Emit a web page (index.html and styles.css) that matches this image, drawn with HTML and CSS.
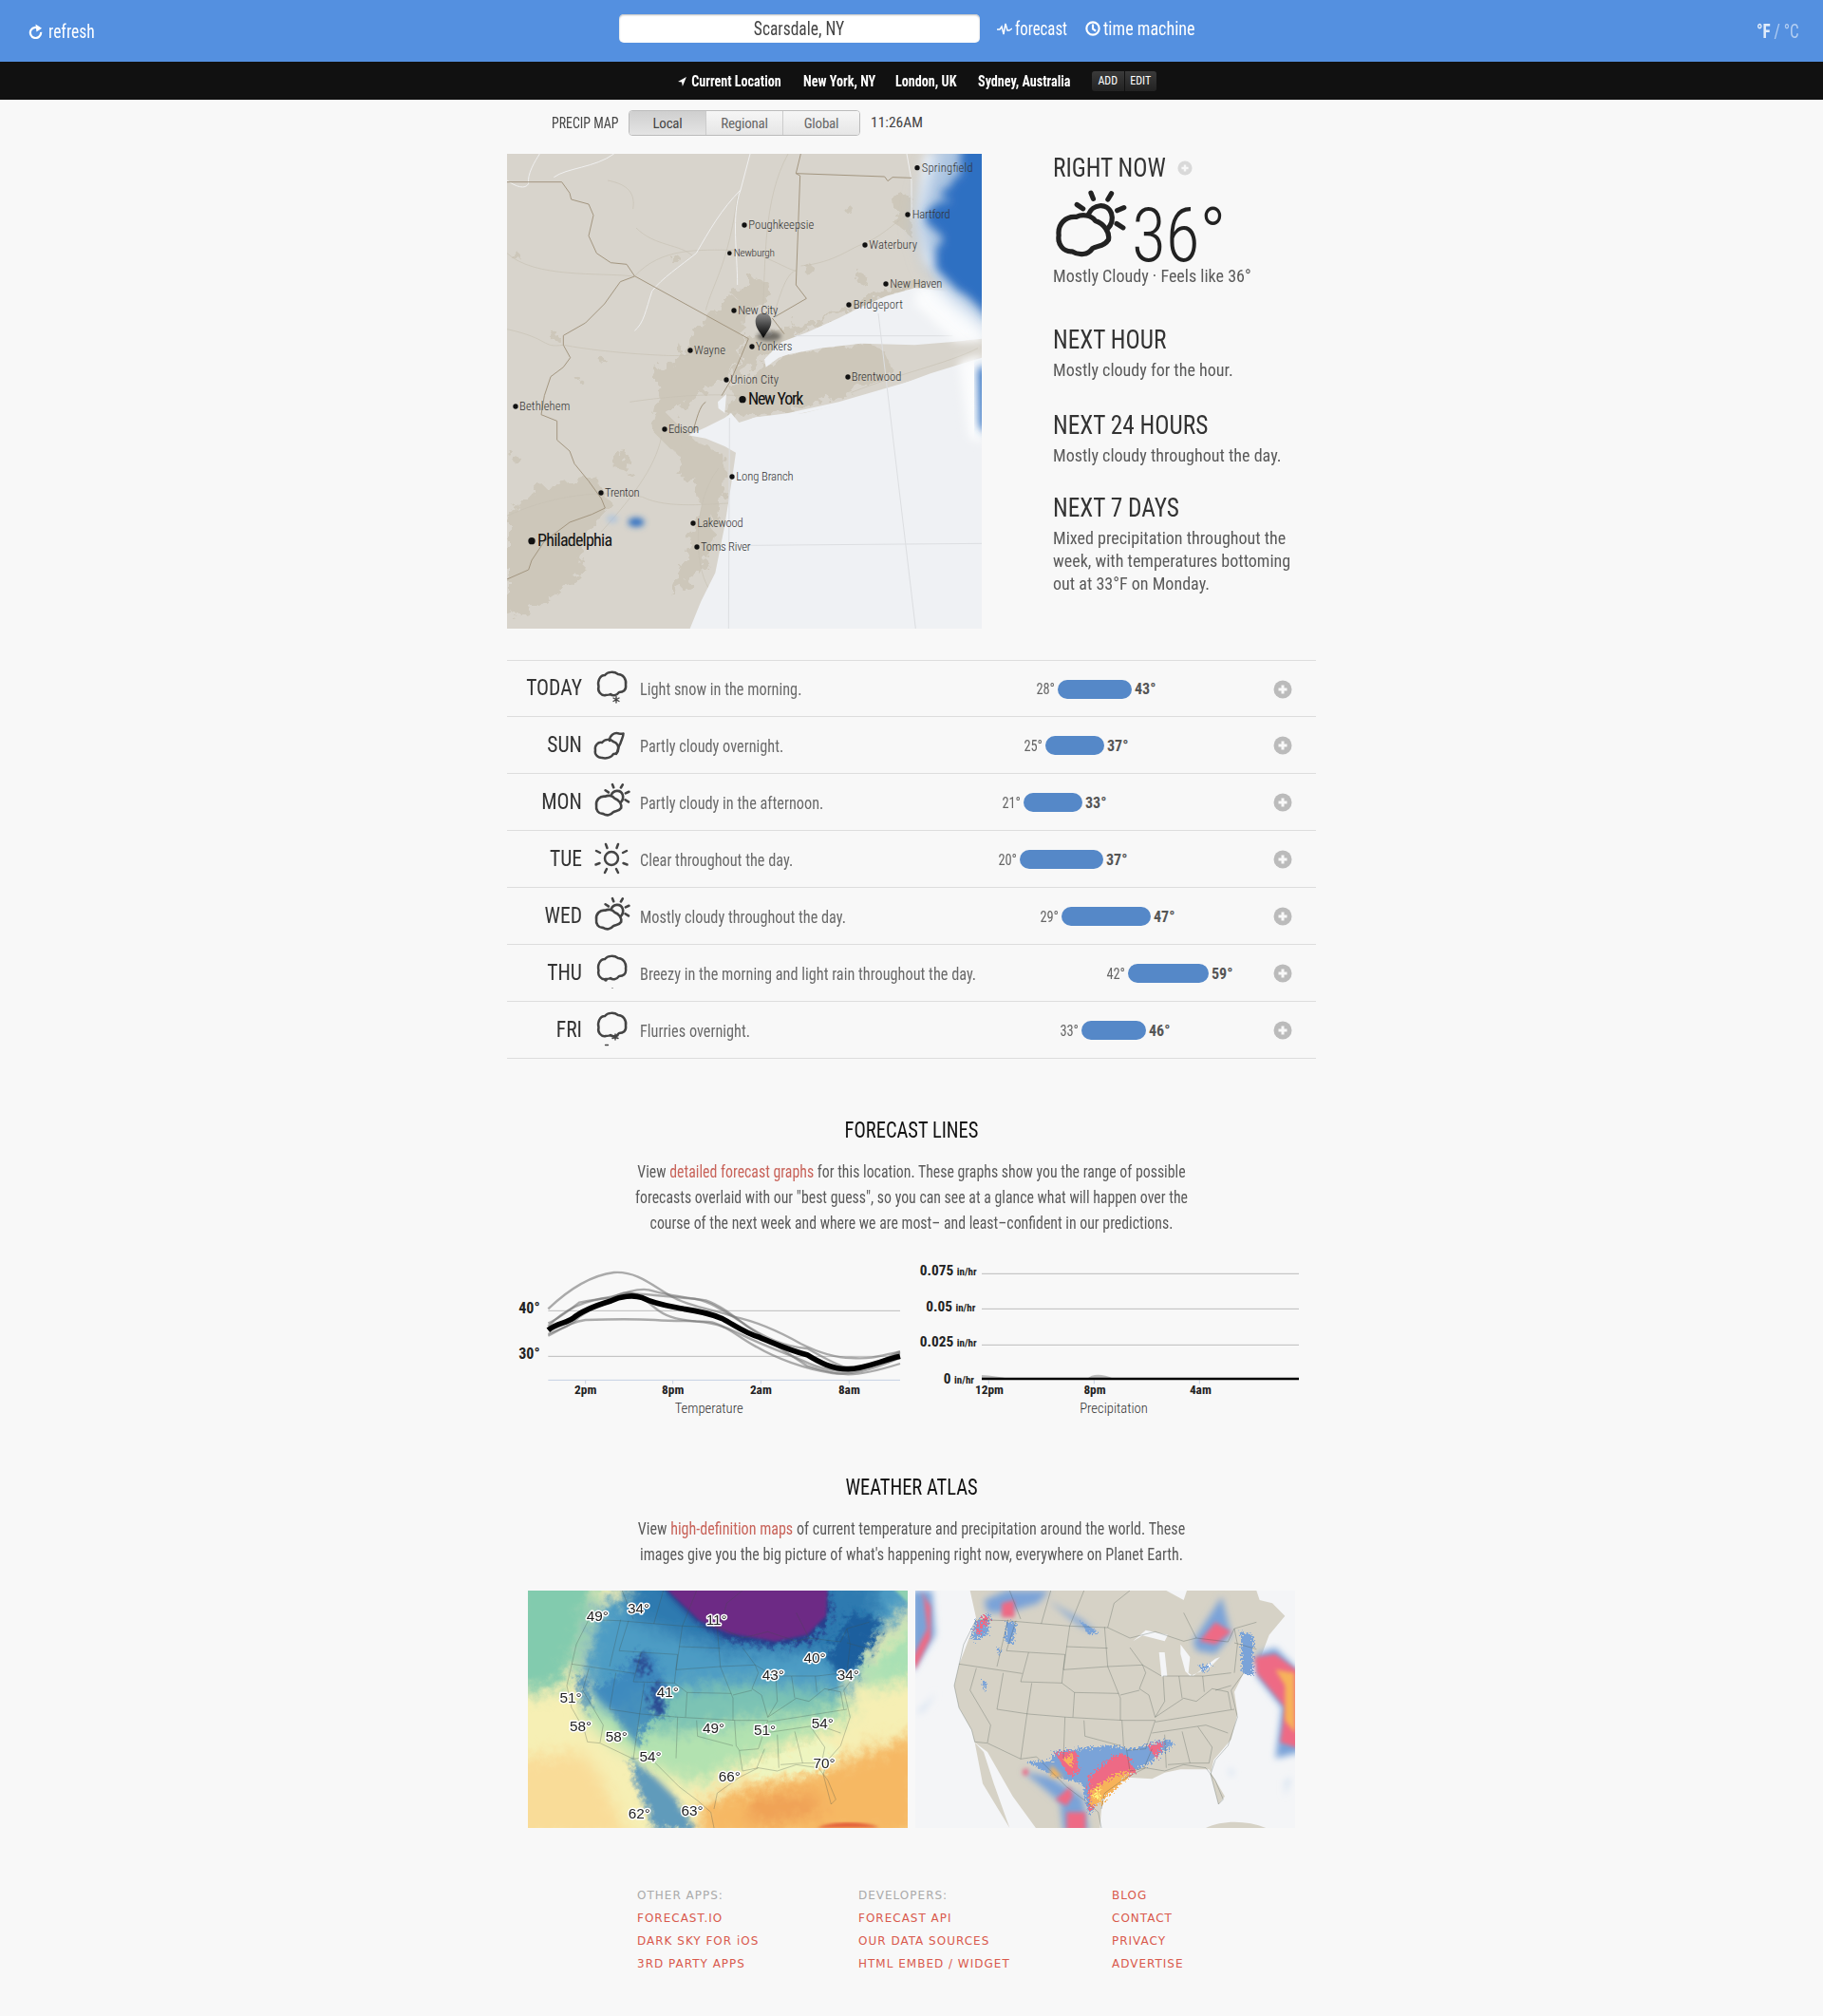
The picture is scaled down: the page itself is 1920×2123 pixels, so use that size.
FILE: index.html
```html
<!DOCTYPE html>
<html lang="en">
<head>
<meta charset="utf-8">
<title>Forecast</title>
<link rel="stylesheet" href="styles.css">
</head>
<body>
<svg class="defs" aria-hidden="true">
  <symbol id="i-partly" viewBox="50 130 260 240">
    <g class="ico">
      <path d="M115 350C85 352 65 325 70 295C65 255 95 228 130 232C150 222 180 225 195 245C225 255 245 285 240 310C225 335 200 330 185 340C170 362 140 365 115 350Z"/>
      <path d="M172 222C185 190 235 180 250 220C258 245 245 265 235 275"/>
      <path d="M180 150L188 170M250 152L238 172M132 190L153 204M293 200L270 210M268 255L290 269"/>
    </g>
  </symbol>
  <symbol id="i-night" viewBox="0 0 40 48">
    <g class="ico1">
      <path d="M10 40C5 40 2 36 3 32C2 27 6 23 10 24C13 20 19 20 22 23C26 24 28 28 27 32C27 35 24 36 22 36C20 40 14 41 10 40Z"/>
      <path d="M18 22C18 16 23 13 28 14.5C30 15 31 15 32.5 14.5C32.5 18 31 20 30 23C29.5 26 27 28 27 31C26.5 33 26 34 25 36"/>
    </g>
  </symbol>
  <symbol id="i-sun" viewBox="0 0 40 40">
    <g class="ico1">
      <circle cx="20" cy="20" r="7"/>
      <path d="M14 5L15.5 9M27 5L25.5 9M4 12L8 14M36 12L32 14M3.5 26.5L7.5 25M36.5 26.5L32.5 25M13 35L15 31M27 35L25 31"/>
    </g>
  </symbol>
  <symbol id="i-cloud" viewBox="0 0 40 40">
    <g class="ico1">
      <path d="M14 30C9 31 5 26 6.5 21C5 15 8 9 13 9C16 5 23 5 27 8C32 8 36 13 35 19C36 25 32 27 28 27C25 31 21 31 19 29C17 30 16 30 14 30Z"/>
    </g>
  </symbol>
  <symbol id="i-plus" viewBox="0 0 20 20">
    <circle cx="10" cy="10" r="9.5" class="plus-bg"/>
    <path d="M10 5.5V14.5M5.5 10H14.5" class="plus-mark"/>
  </symbol>
</svg>

<header class="topbar">
  <a class="refresh">
    <svg class="nav-ico" viewBox="0 0 16 16"><path d="M12.5 5.5A6 6 0 1 0 14 9" class="wstroke"/><path d="M8 0L15 4.5L9 8.5Z" class="wfill"/></svg>
    <span class="sx">refresh</span>
  </a>
  <div class="search-group">
    <div class="search"><span class="sx-c">Scarsdale, NY</span></div>
    <a class="nav-link nav-forecast">
      <svg class="nav-ico2" viewBox="0 0 16 16"><path d="M0 9H3L5 6L7 14L9 3L11 10H13L16 8" class="wstroke-thin"/></svg>
      <span class="sx sx-f">forecast</span>
    </a>
    <a class="nav-link nav-time">
      <svg class="nav-ico2" viewBox="0 0 18 18"><circle cx="9" cy="9" r="7.5" class="wstroke"/><path d="M9 4V9.5L12.5 12" class="wstroke"/></svg>
      <span class="sx sx-t">time machine</span>
    </a>
  </div>
  <div class="units"><span class="unit-on">°F</span> / °C</div>
</header>

<nav class="locbar">
  <a class="loc"><svg class="loc-ico" viewBox="0 0 12 12"><path d="M11 1L0 6.5L5 7L6 12Z" class="wfill"/></svg>Current Location</a>
  <a class="loc">New York, NY</a>
  <a class="loc">London, UK</a>
  <a class="loc">Sydney, Australia</a>
  <div class="loc-btns"><span>ADD</span><span>EDIT</span></div>
</nav>

<main class="wrap">
  <div class="precip">
    <span class="precip-label">PRECIP MAP</span>
    <div class="seg"><span class="seg-on">Local</span><span>Regional</span><span>Global</span></div>
    <span class="precip-time">11:26AM</span>
  </div>

  <section class="top">
    <svg class="localmap" viewBox="12 6 1500 1500">
      <defs>
        <filter id="b6" x="-30%" y="-30%" width="160%" height="160%"><feGaussianBlur stdDeviation="6"/></filter>
        <filter id="b10" x="-60%" y="-60%" width="220%" height="220%"><feGaussianBlur stdDeviation="10"/></filter>
        <filter id="b14" x="-30%" y="-30%" width="160%" height="160%"><feGaussianBlur stdDeviation="14"/></filter>
        <filter id="urb" x="-10%" y="-10%" width="120%" height="120%"><feTurbulence type="fractalNoise" baseFrequency="0.03" numOctaves="3" seed="7" result="n"/><feDisplacementMap in="SourceGraphic" in2="n" scale="60" result="d"/><feGaussianBlur in="d" stdDeviation="1.5"/></filter>
        <filter id="rainf" x="-20%" y="-20%" width="140%" height="140%"><feTurbulence type="fractalNoise" baseFrequency="0.018" numOctaves="3" seed="3" result="n"/><feDisplacementMap in="SourceGraphic" in2="n" scale="60" result="d"/><feGaussianBlur in="d" stdDeviation="15"/></filter>
        <filter id="rainp" x="-40%" y="-40%" width="180%" height="180%"><feGaussianBlur stdDeviation="28"/></filter>
        <linearGradient id="pin" x1="0" y1="0" x2="0" y2="1"><stop offset="0" stop-color="#8c8c8c"/><stop offset=".55" stop-color="#3c3c3c"/><stop offset="1" stop-color="#000"/></linearGradient>
      </defs>
      <rect x="12" y="6" width="1500" height="1500" class="m-land"/>
      <g class="m-urban" filter="url(#urb)">
        <path d="M640 530L710 450L770 480L760 590L720 700L660 740L600 790L520 830L590 900L640 930L700 960L700 1060L670 1180L640 1290L590 1370L530 1400L590 1250L620 1100L600 990L520 930L470 880L490 800L480 690L560 650L590 580Z"/>
        <path d="M770 590L860 560L1000 530L1100 480L1200 440L1330 400L1340 430L1200 470L1050 520L900 590L830 650L760 690L720 720Z"/>
        <path d="M700 830L720 760L830 680L900 640L1130 600L1200 625L1230 690L1100 760L950 810L800 830Z"/>
        <path d="M12 1150L100 1060L200 1050L290 1020L340 1110L260 1200L240 1330L160 1400L80 1450L12 1470Z"/>
        <path d="M1230 150L1280 130L1300 190L1280 260L1240 230Z"/>
        <path d="M710 440L760 420L800 400L840 420L830 480L760 480Z"/>
        <path d="M550 940L640 930L700 980L680 1030L560 1030Z"/>
        <path d="M350 960L400 950L390 1010L350 1000Z"/>
        <circle cx="545" cy="340" r="15"/><circle cx="1090" cy="180" r="12"/><circle cx="830" cy="430" r="18"/><circle cx="1130" cy="400" r="16"/><circle cx="970" cy="375" r="16"/><circle cx="40" cy="330" r="14"/><circle cx="160" cy="580" r="14"/><circle cx="320" cy="665" r="9"/><circle cx="240" cy="720" r="7"/><circle cx="40" cy="970" r="12"/>
      </g>
      <path class="m-road" d="M12 320C100 400 300 380 415 393M415 393C500 300 620 310 730 310C830 320 900 375 925 375M640 500C660 420 710 360 740 140M820 500C830 350 820 150 900 6M860 500C880 430 900 380 925 375M12 560C150 590 120 620 190 610C350 640 600 650 590 640M400 790C600 760 800 760 800 790M440 1090C520 1130 660 1110 720 1110M12 1150C120 1100 280 1060 440 1090M940 360C1050 350 1100 300 1140 290M1140 290C1210 260 1260 200 1280 200M650 1380C600 1300 600 1100 680 1000M420 240C480 300 560 290 600 330M500 900C480 1000 400 1100 310 1200M1100 760C1250 700 1400 670 1500 620M410 180C420 120 380 100 330 90"/>
      <path class="m-water" d="M590 1506L625 1420L670 1330L700 1180L725 1020L735 950L700 930L640 905L585 895L640 870L700 840L720 825L745 855L800 838L950 825L1070 795L1200 755L1350 700L1512 650V1506Z"/>
      <path class="m-water" d="M825 655L880 600L960 570L1060 525L1130 490L1210 455L1300 430L1400 440L1512 500V590L1420 600L1300 610L1130 605L1000 620L900 640L870 650L830 680Z"/>
      <path class="m-water" d="M678 790L705 765L700 825L680 810Z"/>
      <path class="m-water" d="M770 850L900 835L1060 800L1200 760L1300 720L1060 790L900 825L790 840Z"/>
      <path class="m-grid" d="M715 840L712 1506M1185 510L1303 1506M775 1243L1512 1237M920 581L1420 581"/>
      <path class="m-river" d="M415 565C445 540 450 500 470 440C500 400 560 360 610 320C650 250 690 180 750 120C720 200 740 320 740 420M750 120L780 6M160 80C200 50 290 50 350 6M12 90C40 110 70 120 80 100C75 70 100 30 115 6M1275 6L1290 90L1290 210"/>
      <g class="m-line">
        <path d="M12 95L185 95L210 130L215 150L270 165L285 200L270 265L295 320L340 350L390 355L415 392L775 590"/>
        <path d="M415 393L370 410L320 480L260 540L190 580L190 610L212 650L190 680L150 710L130 770L120 830L170 850L170 910L210 945L225 985L270 1040L310 1095L322 1125L280 1145L210 1170L130 1230L90 1290L80 1320L12 1350"/>
        <path d="M775 590L720 720L690 770M640 790C620 800 610 850 600 880"/>
        <path d="M940 6L925 68L938 75L925 420L958 463L860 520M850 525L888 575"/>
        <path d="M925 68L1205 78L1215 92L1230 80L1290 82"/>
      </g>
      <g filter="url(#b14)">
        <path class="m-haze" d="M1310 430L1400 430L1512 490V600L1430 600L1300 480Z"/>
        <path class="m-haze" d="M1440 660L1512 640V920L1470 900Z"/>
        <path class="m-haze" d="M1330 6H1512V500L1440 470L1330 340L1310 200Z"/>
      </g>
      <path class="m-rain-soft" filter="url(#rainp)" d="M1570 -40H1380L1330 120L1310 230L1340 340L1400 440L1510 530L1570 570Z"/>
      <path class="m-rain" filter="url(#rainf)" d="M1570 -40H1455L1445 80L1370 160L1335 220L1390 270L1360 360L1430 430L1495 480L1570 565Z"/>
      <path class="m-rain" filter="url(#b14)" d="M1500 680H1540V890L1505 870Z"/>
      <g filter="url(#b10)">
        <ellipse class="m-rain" cx="420" cy="1170" rx="26" ry="14"/>
        <ellipse class="m-rain-soft" cx="345" cy="1160" rx="18" ry="10"/>
      </g>
      <ellipse class="m-pinshadow" cx="840" cy="582" rx="38" ry="16" filter="url(#b6)"/>
      <path fill="url(#pin)" d="M822 588C808 565 797 555 797 535C797 518 808 509 822 509C836 509 847 518 847 535C847 555 836 565 822 588Z"/>
      <g class="m-dots">
        <circle cx="1308" cy="50" r="8"/><circle cx="1278" cy="198" r="8"/><circle cx="762" cy="231" r="8"/><circle cx="715" cy="320" r="7"/><circle cx="1143" cy="294" r="8"/><circle cx="1209" cy="417" r="8"/><circle cx="1092" cy="483" r="8"/><circle cx="729" cy="501" r="8"/><circle cx="786" cy="615" r="8"/><circle cx="591" cy="627" r="8"/><circle cx="705" cy="720" r="8"/><circle cx="1089" cy="711" r="8"/><circle cx="756" cy="782" r="11"/><circle cx="39" cy="804" r="8"/><circle cx="510" cy="876" r="8"/><circle cx="723" cy="1026" r="8"/><circle cx="309" cy="1077" r="8"/><circle cx="600" cy="1173" r="8"/><circle cx="612" cy="1248" r="8"/><circle cx="90" cy="1229" r="11"/>
      </g>
      <g class="m-label">
        <text x="1322" y="62" textLength="162">Springfield</text><text x="1292" y="210" textLength="120">Hartford</text><text x="775" y="243" textLength="207">Poughkeepsie</text><text x="728" y="331" class="m-small" textLength="130">Newburgh</text><text x="1156" y="306" textLength="152">Waterbury</text><text x="1222" y="429" textLength="165">New Haven</text><text x="1106" y="495" textLength="157">Bridgeport</text><text x="742" y="513" textLength="126">New City</text><text x="798" y="627" textLength="115">Yonkers</text><text x="603" y="639" textLength="99">Wayne</text><text x="718" y="732" textLength="152">Union City</text><text x="1100" y="723" textLength="158">Brentwood</text><text x="774" y="798" class="m-big" textLength="175">New York</text><text x="51" y="816" textLength="160">Bethlehem</text><text x="522" y="888" textLength="96">Edison</text><text x="736" y="1038" textLength="181">Long Branch</text><text x="321" y="1089" textLength="110">Trenton</text><text x="613" y="1185" textLength="145">Lakewood</text><text x="624" y="1260" textLength="158">Toms River</text><text x="108" y="1245" class="m-big" textLength="237">Philadelphia</text>
      </g>
    </svg>
    <div class="outlook">
      <h3 class="out-title"><span class="sx">RIGHT NOW</span><svg class="now-plus"><use href="#i-plus"/></svg></h3>
      <div class="current">
        <svg class="cur-ico"><use href="#i-partly"/></svg>
        <span class="cur-temp">36°</span>
      </div>
      <p class="out-text">Mostly Cloudy · Feels like 36°</p>
      <h3 class="out-title out-first"><span class="sx">NEXT HOUR</span></h3>
      <p class="out-text out-gap">Mostly cloudy for the hour.</p>
      <h3 class="out-title out-second"><span class="sx">NEXT 24 HOURS</span></h3>
      <p class="out-text out-gap">Mostly cloudy throughout the day.</p>
      <h3 class="out-title out-third"><span class="sx">NEXT 7 DAYS</span></h3>
      <p class="out-text out-gap">Mixed precipitation throughout the week, with temperatures bottoming out at 33°F on Monday.</p>
    </div>
  </section>

  <section class="days">
    <div class="day">
      <span class="d-name">TODAY</span>
      <svg class="d-ico" viewBox="0 0 40 48"><use href="#i-cloud" width="40" height="40" y="3"/><path d="M25 34.5V41M22 36L28 39.5M28 36L22 39.5" class="flake"/></svg>
      <span class="d-sum">Light snow in the morning.</span>
      <div class="d-range"><span class="d-low" style="margin-left:29px">28°</span><span class="d-bar" style="width:78px"></span><span class="d-high">43°</span></div>
      <svg class="d-plus"><use href="#i-plus"/></svg>
    </div>
    <div class="day">
      <span class="d-name">SUN</span>
      <svg class="d-ico" viewBox="0 0 40 48"><use href="#i-night" width="40" height="48"/></svg>
      <span class="d-sum">Partly cloudy overnight.</span>
      <div class="d-range"><span class="d-low" style="margin-left:16px">25°</span><span class="d-bar" style="width:62px"></span><span class="d-high">37°</span></div>
      <svg class="d-plus"><use href="#i-plus"/></svg>
    </div>
    <div class="day">
      <span class="d-name">MON</span>
      <svg class="d-ico" viewBox="0 0 40 48"><use href="#i-partly" width="40" height="37" x="1" y="5"/></svg>
      <span class="d-sum">Partly cloudy in the afternoon.</span>
      <div class="d-range"><span class="d-low" style="margin-left:-7px">21°</span><span class="d-bar" style="width:62px"></span><span class="d-high">33°</span></div>
      <svg class="d-plus"><use href="#i-plus"/></svg>
    </div>
    <div class="day">
      <span class="d-name">TUE</span>
      <svg class="d-ico" viewBox="0 0 40 48"><use href="#i-sun" width="40" height="40" y="6"/></svg>
      <span class="d-sum">Clear throughout the day.</span>
      <div class="d-range"><span class="d-low" style="margin-left:-11px">20°</span><span class="d-bar" style="width:88px"></span><span class="d-high">37°</span></div>
      <svg class="d-plus"><use href="#i-plus"/></svg>
    </div>
    <div class="day">
      <span class="d-name">WED</span>
      <svg class="d-ico" viewBox="0 0 40 48"><use href="#i-partly" width="40" height="37" x="1" y="5"/></svg>
      <span class="d-sum">Mostly cloudy throughout the day.</span>
      <div class="d-range"><span class="d-low" style="margin-left:33px">29°</span><span class="d-bar" style="width:94px"></span><span class="d-high">47°</span></div>
      <svg class="d-plus"><use href="#i-plus"/></svg>
    </div>
    <div class="day">
      <span class="d-name">THU</span>
      <svg class="d-ico" viewBox="0 0 40 48"><use href="#i-cloud" width="40" height="40" y="3"/><circle cx="14" cy="34" r="1.8" class="dropdot"/><circle cx="21" cy="42.5" r=".6" class="dropdot"/></svg>
      <span class="d-sum">Breezy in the morning and light rain throughout the day.</span>
      <div class="d-range"><span class="d-low" style="margin-left:103px">42°</span><span class="d-bar" style="width:85px"></span><span class="d-high">59°</span></div>
      <svg class="d-plus"><use href="#i-plus"/></svg>
    </div>
    <div class="day">
      <span class="d-name">FRI</span>
      <svg class="d-ico" viewBox="0 0 40 48"><use href="#i-cloud" width="40" height="40" y="3"/><path d="M24 31V37M21 32.5L27 35.5M27 32.5L21 35.5" class="flake"/><path d="M13.5 42.5H16.5" class="flake"/></svg>
      <span class="d-sum">Flurries overnight.</span>
      <div class="d-range"><span class="d-low" style="margin-left:54px">33°</span><span class="d-bar" style="width:68px"></span><span class="d-high">46°</span></div>
      <svg class="d-plus"><use href="#i-plus"/></svg>
    </div>
  </section>

  <section class="promo promo-lines">
    <h2 class="promo-title">FORECAST LINES</h2>
    <p class="promo-text">View <a class="red">detailed forecast graphs</a> for this location. These graphs show you the range of possible<br>forecasts overlaid with our "best guess", so you can see at a glance what will happen over the<br>course of the next week and where we are most– and least–confident in our predictions.</p>
  </section>

  <div class="charts">
    <svg class="chart chart-temp" viewBox="0 0 1260 570">
      <path class="c-grid" d="M142 211H1254M142 355H1254"/>
      <path class="c-axis" d="M142 430H1254M260 430V442M536 430V442M814 430V442M1093 430V442"/>
      <g class="c-soft">
        <path d="M142 205C200 150 270 100 350 90C420 85 470 130 530 165C590 200 680 210 730 230C800 245 860 270 940 315C1000 345 1050 360 1100 360C1170 365 1200 350 1254 340"/>
        <path d="M142 260C200 200 270 175 340 170C390 150 430 140 460 145C510 160 580 170 640 178C690 195 730 230 770 260C830 300 900 345 960 385C1020 405 1060 410 1090 412C1140 412 1200 395 1254 378"/>
        <path d="M142 290C190 265 220 245 260 240C320 238 400 236 480 240C550 245 620 242 660 247C710 260 750 300 800 325C860 360 950 395 1040 408C1100 415 1160 400 1254 360"/>
        <path d="M142 250C170 240 200 215 240 185C280 175 330 175 380 155C420 145 450 180 490 210C530 238 570 240 610 245C680 250 720 270 760 290C820 320 880 340 950 370C1000 395 1060 405 1100 403C1170 395 1220 355 1254 345"/>
        <path d="M142 285C170 270 210 265 240 230C300 190 350 170 400 155C450 160 520 165 590 172C650 175 700 215 750 245C800 280 880 325 960 330C1000 350 1050 385 1100 395C1170 395 1220 350 1254 340"/>
      </g>
      <path class="c-main" d="M142 272C170 250 200 250 220 235C250 210 290 195 340 180C370 165 410 160 440 170C480 190 520 195 570 205C620 212 650 218 690 235C730 255 760 280 810 295C860 315 900 335 960 350C1000 375 1040 395 1090 395C1140 395 1190 370 1254 355"/>
      <g class="c-y"><text x="116" y="219">40°</text><text x="116" y="363">30°</text></g>
      <g class="c-x"><text x="260" y="474">2pm</text><text x="536" y="474">8pm</text><text x="814" y="474">2am</text><text x="1093" y="474">8am</text></g>
      <text x="650" y="534" class="c-name">Temperature</text>
    </svg>
    <svg class="chart chart-rain" viewBox="0 0 1320 570">
      <path class="c-grid" d="M252 94H1254M252 205H1254M252 319H1254"/>
      <path class="c-axis" d="M274 430V442M607 430V442M940 430V442"/>
      <path class="c-area" d="M252 414C280 416 310 420 340 426H252ZM585 426C600 410 630 408 670 426Z"/>
      <path class="c-base" d="M252 426H1254"/>
      <g class="c-y c-ys">
        <text x="236" y="98">0.075 <tspan class="c-unit">in/hr</tspan></text>
        <text x="232" y="212">0.05 <tspan class="c-unit">in/hr</tspan></text>
        <text x="236" y="325">0.025 <tspan class="c-unit">in/hr</tspan></text>
        <text x="228" y="441">0 <tspan class="c-unit">in/hr</tspan></text>
      </g>
      <g class="c-x"><text x="276" y="474">12pm</text><text x="609" y="474">8pm</text><text x="943" y="474">4am</text></g>
      <text x="669" y="534" class="c-name">Precipitation</text>
    </svg>
  </div>

  <section class="promo promo-atlas">
    <h2 class="promo-title">WEATHER ATLAS</h2>
    <p class="promo-text promo-text-wide">View <a class="red">high-definition maps</a> of current temperature and precipitation around the world. These<br>images give you the big picture of what's happening right now, everywhere on Planet Earth.</p>
  </section>

  <div class="atlas">
    <svg class="atlas-map" viewBox="18 30 1200 750">
      <defs>
        <filter id="t30" x="-30%" y="-30%" width="160%" height="160%"><feGaussianBlur in="SourceGraphic" stdDeviation="26" result="b"/><feTurbulence type="fractalNoise" baseFrequency="0.03" numOctaves="4" seed="11" result="n"/><feDisplacementMap in="b" in2="n" scale="50"/></filter>
        <filter id="t12" x="-30%" y="-30%" width="160%" height="160%"><feGaussianBlur in="SourceGraphic" stdDeviation="10" result="b"/><feTurbulence type="fractalNoise" baseFrequency="0.05" numOctaves="4" seed="5" result="n"/><feDisplacementMap in="b" in2="n" scale="60"/></filter>
        <filter id="t4" x="-10%" y="-10%" width="120%" height="120%"><feGaussianBlur stdDeviation="4"/></filter>
        <clipPath id="clipT"><rect x="18" y="30" width="1200" height="750"/></clipPath>
        <symbol id="states" viewBox="12 30 1200 750" overflow="visible">
          <path class="st" d="M205 120L165 200L150 265L135 330L150 400L190 470L200 508L240 512L345 562L395 555L440 600L490 650L550 695L590 730L600 780M600 720L610 670L680 620L740 590L800 600L860 580L930 590L960 630L985 690L970 705L945 610L960 565L1000 520L1030 430L1010 345L1050 290M210 122L300 125L500 142L620 147L690 180L770 160L860 190L900 180L1000 192L1020 150L1090 130M150 262L350 292M205 275L185 345L250 455L240 510M290 290L270 405L370 420L490 430L670 440L770 440M370 225L345 318L475 322L485 232L370 225M380 322L365 420L345 562M475 322L515 352L655 355M515 352L510 430M485 430L480 560M545 440L548 490L660 520M500 142L480 280L620 270L610 145M490 207L620 212M620 270L660 370L660 440M330 125L300 220L370 225M305 122L270 270M620 270L730 265L740 290L720 340L750 360L770 430M660 360L720 345M665 440L670 520L680 535L740 530L770 440M680 535L690 600L740 590M735 590L760 530M800 485L805 590M855 475L880 575L810 580M770 445L1020 405M760 480L930 455L1000 480M905 460L950 525L940 575L880 575M795 300L800 380L770 430M845 300L855 370M920 300L925 350M770 430L860 370L900 380L950 340L1000 350L1010 405M795 300L925 300L1010 290M690 210L730 265L790 300M440 30L410 135M545 30L500 142M640 70L690 30M640 70L620 147M860 100L900 180M310 30L345 120M1020 150L1030 200L1020 290M1020 195L1090 215M960 345L1010 330"/>
        </symbol>
      </defs>
      <g clip-path="url(#clipT)">
        <rect x="18" y="30" width="1200" height="750" class="t-base"/>
        <g filter="url(#t30)">
          <path class="t-ocean" d="M-40 -40H250L170 260L110 340L-40 360Z"/>
          <path class="t-sand" d="M-40 560L190 540L250 620L340 820H-40Z"/>
          <path class="t-gulf" d="M560 710L680 650L900 610L1000 570L1260 480V820H560Z"/>
          <path class="t-orange" d="M720 690L920 670L950 730L720 770Z"/>
          <path class="t-right" d="M1050 310L1260 100V300L1100 340Z"/>
          <path class="t-green" d="M200 330L500 300L900 330L1040 380L1030 430L930 480L700 570L560 640L470 620L330 540L200 440Z"/>
          <path class="t-mid" d="M260 330L900 290L1030 370L950 420L700 440L520 480L340 470Z"/>
          <path class="t-blue" d="M230 90L440 -20H1260V60L1090 200L1060 290L1020 350L900 340L700 320L480 340L350 370L330 430L240 400L190 280Z"/>
          <path class="t-deep" d="M330 -20H1130L1120 180L1010 240L830 225L640 225L500 180L340 120Z"/>
        </g>
        <path class="t-cream" d="M700 590L950 500L1010 540L940 600L720 620Z" filter="url(#t12)"/>
        <path class="t-corner" d="M1170 20H1240V90Z" filter="url(#t4)"/>
        <g filter="url(#t12)">
          <path class="t-navy" d="M440 20H970L970 130L910 190L780 205L640 185L550 130Z"/>
          <path class="t-rock" d="M360 230L420 230L440 300L460 420L420 430L380 480L370 530L300 440L290 420L220 340L300 300Z"/>
          <path class="t-rock" d="M340 560L420 620L480 680L550 790L420 790L360 640Z"/>
          <path class="t-ne" d="M1040 100L1140 120L1050 290L1000 300L960 240Z"/>
          <path class="t-rock" d="M170 290L210 300L210 420L190 400Z"/>
        </g>
        <path class="t-purple" d="M450 20H965L960 110L900 170L800 190L650 165L560 125Z" filter="url(#t4)"/>
        <g class="t-dark" filter="url(#t12)">
          <path d="M365 250L395 225L395 290L365 310Z"/><path d="M420 320L445 320L445 420L400 410Z"/>
        </g>
        <path class="t-red" d="M930 780C980 760 1060 755 1130 778Z" filter="url(#t4)"/>
        <use href="#states" x="18" y="30" width="1200" height="750"/>
      </g>
      <g class="t-label">
        <text x="238" y="127">49°</text><text x="368" y="103">34°</text><text x="614" y="137">11°</text><text x="924" y="258">40°</text><text x="1030" y="311">34°</text><text x="793" y="313">43°</text><text x="460" y="365">41°</text><text x="153" y="385">51°</text><text x="185" y="475">58°</text><text x="298" y="508">58°</text><text x="405" y="570">54°</text><text x="605" y="481">49°</text><text x="767" y="487">51°</text><text x="949" y="464">54°</text><text x="954" y="590">70°</text><text x="655" y="634">66°</text><text x="370" y="750">62°</text><text x="537" y="742">63°</text>
      </g>
    </svg>
    <svg class="atlas-map" viewBox="12 30 1200 750">
      <defs>
        <filter id="p10" x="-30%" y="-30%" width="160%" height="160%"><feGaussianBlur stdDeviation="11"/></filter>
        <filter id="p4" x="-30%" y="-30%" width="160%" height="160%"><feGaussianBlur stdDeviation="7"/></filter>
        <filter id="rough" x="-10%" y="-10%" width="120%" height="120%"><feTurbulence type="fractalNoise" baseFrequency="0.16" numOctaves="2" seed="4" result="n"/><feDisplacementMap in="SourceGraphic" in2="n" scale="34" result="d"/><feGaussianBlur in="d" stdDeviation="1.6"/></filter>
        <clipPath id="clipP"><rect x="12" y="30" width="1200" height="750"/></clipPath>
      </defs>
      <g clip-path="url(#clipP)">
        <rect x="12" y="30" width="1200" height="750" class="p-water"/>
        <path class="p-land" d="M185 30L205 120L150 265L135 330L150 400L190 470L200 510L240 540L320 680L400 790H595L600 720L610 670L680 620L760 625L800 605L850 595L940 595L990 680L970 705L945 610L955 565L1010 500L1030 420L1020 350L1050 290L1100 250L1130 170L1180 110L1140 70L1100 60L1090 30Z"/>
        <path class="p-land" d="M200 510L225 640L310 780L260 640L228 540Z"/>
        <path class="p-land" d="M930 780C980 755 1060 755 1120 780Z"/>
        <path class="p-water" d="M700 190L740 155L810 170L800 190L730 172Z"/>
        <path class="p-water" d="M782 225L800 225L808 300L790 302Z"/>
        <path class="p-water" d="M850 200L880 240L875 290L890 300L960 245L975 240L940 275L880 300L865 285L850 230Z"/>
        <path class="p-water" d="M805 30L870 30L860 60Z"/>
        <g class="p-blue" filter="url(#p10)">
          <path d="M230 60L300 30H435L400 70L300 100L240 100Z"/>
          <path d="M430 60L540 125L590 165L530 140Z"/>
          <path d="M890 190L980 50L1010 170L960 230L900 220Z"/>
          <path d="M1090 230L1150 210L1230 290V540L1150 560L1170 400L1090 300Z"/>
          <path d="M0 30H65L75 170L0 290Z"/>
          <path d="M350 600L440 620L540 680L560 790H480L470 700L400 640Z"/>
          <path class="p-pale" d="M12 420L80 350L40 410Z"/>
          <path class="p-pale" d="M1000 590L1020 600L1010 620Z"/>
          <path class="p-pale" d="M1180 630L1200 620L1180 680Z"/>
        </g>
        <g class="p-blue" filter="url(#rough)">
          <path d="M360 570L440 570L450 540L520 530L620 520L700 530L800 500L830 510L760 570L700 600L640 650L590 700L560 740L540 640L460 620L420 600Z"/>
          <path d="M200 130L250 100L240 170L190 190Z"/>
          <path d="M300 130L330 130L320 200L295 190Z"/>
          <path d="M1040 160L1080 170L1080 300L1045 290Z"/>
          <path d="M530 125L590 160L560 170Z"/>
          <path d="M910 270L950 260L920 290Z"/>
          <path d="M270 210L285 215L275 235Z"/>
          <path d="M225 315L240 315L228 350Z"/>
        </g>
        <g class="p-pink" filter="url(#p4)">
          <path d="M285 70L325 60L325 115L285 115Z"/>
          <path d="M910 190L960 130L1010 160L960 200Z"/>
          <path d="M1085 240L1150 230L1230 290V530L1165 510L1180 400L1090 290Z"/>
          <path d="M0 250L50 150L40 60L30 30L60 80L60 180L12 280Z"/>
          <path d="M455 690L500 650L510 680L490 710Z"/>
          <path d="M490 730L550 730L550 790H490Z"/>
          <path d="M350 600L365 590L370 610L355 615Z"/>
        </g>
        <g class="p-pink" filter="url(#rough)">
          <path d="M455 545L520 535L530 600L500 620L470 570Z"/>
          <path d="M560 620L640 550L680 560L710 600L650 640L590 700L560 730Z"/>
          <path d="M745 520L800 510L770 560Z"/>
          <path d="M230 110L250 115L210 170L200 160Z"/>
          <path d="M610 590L660 545L700 560L640 610Z"/>
        </g>
        <g class="p-orange" filter="url(#p4)">
          <path d="M1150 280L1210 290L1212 480L1180 440L1180 330Z"/>
          <path d="M440 580L480 620L440 620Z"/>
        </g>
        <g class="p-orange" filter="url(#rough)">
          <path d="M565 660L650 610L700 600L600 700L565 715Z"/>
          <path d="M480 565L510 545L505 590Z"/>
        </g>
        <path class="p-yellow" d="M570 680L600 650L590 690Z" filter="url(#rough)"/>
        <use href="#states" x="12" y="30" width="1200" height="750"/>
      </g>
    </svg>
  </div>

  <footer class="foot">
    <div class="f-col f-a"><span class="f-head">OTHER APPS:</span><a>FORECAST.IO</a><a>DARK SKY FOR iOS</a><a>3RD PARTY APPS</a></div>
    <div class="f-col f-b"><span class="f-head">DEVELOPERS:</span><a>FORECAST API</a><a>OUR DATA SOURCES</a><a>HTML EMBED / WIDGET</a></div>
    <div class="f-col"><a>BLOG</a><a>CONTACT</a><a>PRIVACY</a><a>ADVERTISE</a></div>
  </footer>
</main>
</body>
</html>
```
FILE: styles.css
```css
:root { --cond: "Roboto Condensed", "Liberation Sans Narrow", "Liberation Sans", sans-serif; }
* { box-sizing: border-box; }
html, body { margin: 0; padding: 0; }
body { background: #f8f8f8; font-family: var(--cond); color: #444; min-height: 2123px; }
.defs { width: 0; height: 0; position: absolute; }
.ico { fill: none; stroke: currentColor; stroke-width: 17; stroke-linecap: round; stroke-linejoin: round; }
.ico1 { fill: none; stroke: #444; stroke-width: 2.5; stroke-linecap: round; stroke-linejoin: round; }
.flake { fill: none; stroke: #444; stroke-width: 1.4; stroke-linecap: round; }
.dropdot { fill: #444; }
.plus-bg { fill: #bbb; }
.plus-mark { stroke: #f8f8f8; stroke-width: 3; }
.sx { display: inline-block; white-space: nowrap; transform: scaleX(.875); transform-origin: left center; }
.sx-f { transform: scaleX(.84); }
.sx-t { transform: scaleX(.905); }

.topbar { height: 65px; background: #5490e0; display: flex; color: #fff; font-size: 20px; position: relative; }
.refresh { display: flex; align-items: center; gap: 6px; margin-left: 30px; width: 622px; height: 65px; }
.nav-ico { width: 15px; height: 16px; }
.nav-ico2 { width: 16px; height: 16px; flex: none; }
.wstroke { fill: none; stroke: #fff; stroke-width: 2.4; }
.wstroke-thin { fill: none; stroke: #fff; stroke-width: 1.4; }
.wfill { fill: #fff; }
.search-group { display: flex; align-items: center; height: 60px; }
.search { width: 380px; height: 30px; border-radius: 5px; background: #fff; box-shadow: inset 0 1px 2px #bbb; text-align: center; line-height: 31px; font-size: 20px; color: #444; margin-right: 18px; }
.sx-c { display: inline-block; transform: scaleX(.875); }
.nav-link { display: flex; align-items: center; gap: 3px; flex: none; }
.nav-forecast { width: 93px; }
.nav-time { width: 120px; }
.units { position: absolute; right: 25px; top: 21px; font-size: 20px; color: #b3cef2; transform: scaleX(.85); transform-origin: right center; }
.unit-on { color: #e3edfa; font-weight: 700; }

.locbar { height: 40px; background: #111; display: grid; grid-template-columns: 132px 97px 87px 120px 68px; align-items: center; padding-left: 714px; color: #fff; font-size: 16px; font-weight: 700; }
.loc { display: flex; align-items: center; white-space: nowrap; transform: scaleX(.885); transform-origin: left center; }
.loc-ico { width: 11px; height: 11px; margin-right: 5px; }
.loc-btns { display: flex; width: 68px; height: 21px; background: linear-gradient(#3a3a3a, #222); border-radius: 3px; font-size: 12px; align-items: center; font-weight: 400; }
.loc-btns span { flex: 1; text-align: center; height: 100%; line-height: 21px; }
.loc-btns span + span { border-left: 1px solid #111; }

.wrap { width: 852px; margin: 0 auto; }
.precip { display: grid; grid-template-columns: 81px 244px auto; align-items: center; height: 27px; margin: 10px 0 20px; padding-left: 47px; font-size: 16px; color: #444; line-height: 29px; }
.precip-label { white-space: nowrap; transform: scaleX(.867); transform-origin: left center; }
.precip-time { margin-left: 11px; font-size: 15.5px; }
.seg { display: flex; height: 27px; border: 1px solid #bbb; border-radius: 4px; overflow: hidden; font-size: 15px; letter-spacing: -.2px; }
.seg span { flex: 1; line-height: 27px; text-align: center; background: linear-gradient(#f6f6f6, #e6e6e6); color: #666; border-left: 1px solid #ccc; }
.seg .seg-on { background: linear-gradient(#cfcfcf, #e4e4e4); color: #444; border-left: 0; }

.top { display: flex; height: 500px; }
.localmap { width: 500px; height: 500px; flex: none; display: block; }
.m-land { fill: #d8d4cc; }
.m-urban { fill: #cdc7ba; }
.m-water { fill: #eff1f4; }
.m-grid { fill: none; stroke: #dcdee1; stroke-width: 3; }
.m-river { fill: none; stroke: #f0f0f0; stroke-width: 3; }
.m-road { fill: none; stroke: #c7c1b3; stroke-width: 2; }
.m-line { fill: none; stroke: #a39680; stroke-width: 3; }
.m-haze { fill: #fbfcfd; }
.m-rain { fill: #2d70c2; }
.m-rain-soft { fill: #a9c2e0; }
.m-pinshadow { fill: #000; opacity: .45; }
.m-dots { fill: #111; }
.m-label { font-size: 38px; font-weight: 300; fill: #333; }
.m-small { font-size: 34px; }
.m-big { font-size: 54px; font-weight: 400; fill: #111; }

.outlook { margin-left: 75px; width: 277px; }
.out-title { margin: 0; font-size: 28px; font-weight: 400; line-height: 30px; color: #333; display: flex; align-items: center; }
.out-title .sx { transform: scaleX(.905); }
.now-plus { width: 16px; height: 16px; margin-left: 0; opacity: .5; }
.current { display: flex; height: 84px; margin-top: 3px; align-items: flex-end; }
.cur-ico { width: 80px; height: 74px; flex: none; margin-bottom: 8px; color: #222; }
.cur-temp { font-size: 80px; line-height: 62px; font-weight: 300; color: #222; margin-left: 3px; transform: scaleX(.92); transform-origin: left center; }
.out-text { margin: 0; font-size: 19px; line-height: 24px; color: #5a5a5a; transform: scaleX(.95); transform-origin: left center; }
.out-gap { margin-top: 5px; }
.out-first { margin-top: 40px; }
.out-second { margin-top: 31px; }
.out-third { margin-top: 28px; }

.days { margin-top: 33px; border-top: 1px solid #ddd; }
.day { height: 60px; padding-top: 1px; border-bottom: 1px solid #ddd; display: flex; align-items: center; color: #444; }
.day:first-child { height: 59px; }
.d-name { width: 79px; text-align: right; font-size: 24px; color: #333; margin-top: -3px; flex: none; transform: scaleX(.9); transform-origin: right center; }
.d-ico { width: 40px; height: 48px; margin-left: 11px; margin-top: -6px; flex: none; }
.d-sum { width: 374px; flex: none; margin-left: 10px; font-size: 18px; color: #6a6a6a; white-space: nowrap; transform: scaleX(.905); transform-origin: left center; }
.d-range { flex: 1; display: flex; align-items: center; }
.d-low { font-size: 16px; color: #666; width: 34px; text-align: right; margin-right: 3px; flex: none; transform: scaleX(.9); transform-origin: right center; }
.d-bar { height: 20px; border-radius: 10px; background: #5588c8; flex: none; }
.d-high { font-size: 16px; font-weight: 700; color: #555; margin-left: 3px; }
.d-plus { width: 20px; height: 20px; margin-right: 25px; flex: none; }

.promo { text-align: center; }
.promo-lines { margin-top: 60px; }
.promo-atlas { margin-top: 51px; }
.promo-title { margin: 0; font-size: 24px; font-weight: 400; line-height: 30px; color: #111; transform: scaleX(.855); }
.promo-text { margin: 15px 0 0; font-size: 18px; line-height: 27px; color: #5a5a5a; transform: scaleX(.88); }
.promo-text-wide { transform: scaleX(.893); }
.red { color: #c8635a; }

.charts { display: flex; width: 860px; margin: 9px 0 0 -4px; }
.chart { display: block; height: 190px; flex: none; }
.chart-temp { width: 420px; }
.chart-rain { width: 440px; }
.c-grid { stroke: #bbb; stroke-width: 3; fill: none; }
.c-axis { stroke: #c5d0e2; stroke-width: 3; fill: none; }
.c-soft { fill: none; stroke: #777; stroke-opacity: .6; stroke-width: 7; }
.c-main { fill: none; stroke: #000; stroke-width: 17; stroke-linejoin: round; }
.c-base { stroke: #000; stroke-width: 7; }
.c-area { fill: #bbb; }
.c-y { font-size: 48px; font-weight: 700; fill: #222; text-anchor: end; }
.c-ys { font-size: 46px; }
.c-unit { font-size: 33px; }
.c-x { font-size: 40px; font-weight: 700; fill: #222; text-anchor: middle; }
.c-name { font-size: 44px; font-weight: 300; fill: #333; text-anchor: middle; }

.atlas { display: flex; gap: 8px; padding-left: 22px; margin-top: 25px; }
.atlas-map { width: 400px; height: 250px; display: block; flex: none; }
.st { fill: none; stroke: #40504a; stroke-opacity: .55; stroke-width: 1.6; }
.t-base { fill: #f6efb4; }
.t-ocean { fill: #82cbae; }
.t-sand { fill: #f9dc98; }
.t-gulf { fill: #f6b863; }
.t-orange { fill: #ef9f55; }
.t-right { fill: #a8e0b4; }
.t-green { fill: #b2e2b0; }
.t-mid { fill: #7cc3b4; }
.t-blue { fill: #4e9cc4; }
.t-deep { fill: #2e7ab0; }
.t-cream { fill: #eef5c0; }
.t-corner { fill: #8fd0b0; }
.t-navy { fill: #27418c; }
.t-rock { fill: #3c86bd; opacity: .8; }
.t-ne { fill: #1f5f9e; }
.t-purple { fill: #6d2a85; }
.t-dark { fill: #2b4a90; }
.t-red { fill: #e4603a; }
.t-label { font-family: "Liberation Sans", sans-serif; font-size: 46px; fill: #222; text-anchor: middle; paint-order: stroke; stroke: #fff; stroke-width: 9; stroke-linejoin: round; }
.p-water { fill: #f4f5f7; }
.p-land { fill: #d6d2c6; }
.p-blue { fill: #7aa3d8; }
.p-blue .p-pale { fill: #d3e0f0; }
.p-pink { fill: #ee6a85; }
.p-orange { fill: #f7b35a; }
.p-yellow { fill: #fff07a; }

.foot { display: flex; padding-left: 137px; margin-top: 59px; font-family: "DejaVu Sans", sans-serif; font-size: 12px; letter-spacing: 1px; line-height: 24px; color: #d9594c; }
.f-col { display: flex; flex-direction: column; }
.f-a { width: 233px; }
.f-b { width: 267px; }
.f-head { color: #aaa; }
```
